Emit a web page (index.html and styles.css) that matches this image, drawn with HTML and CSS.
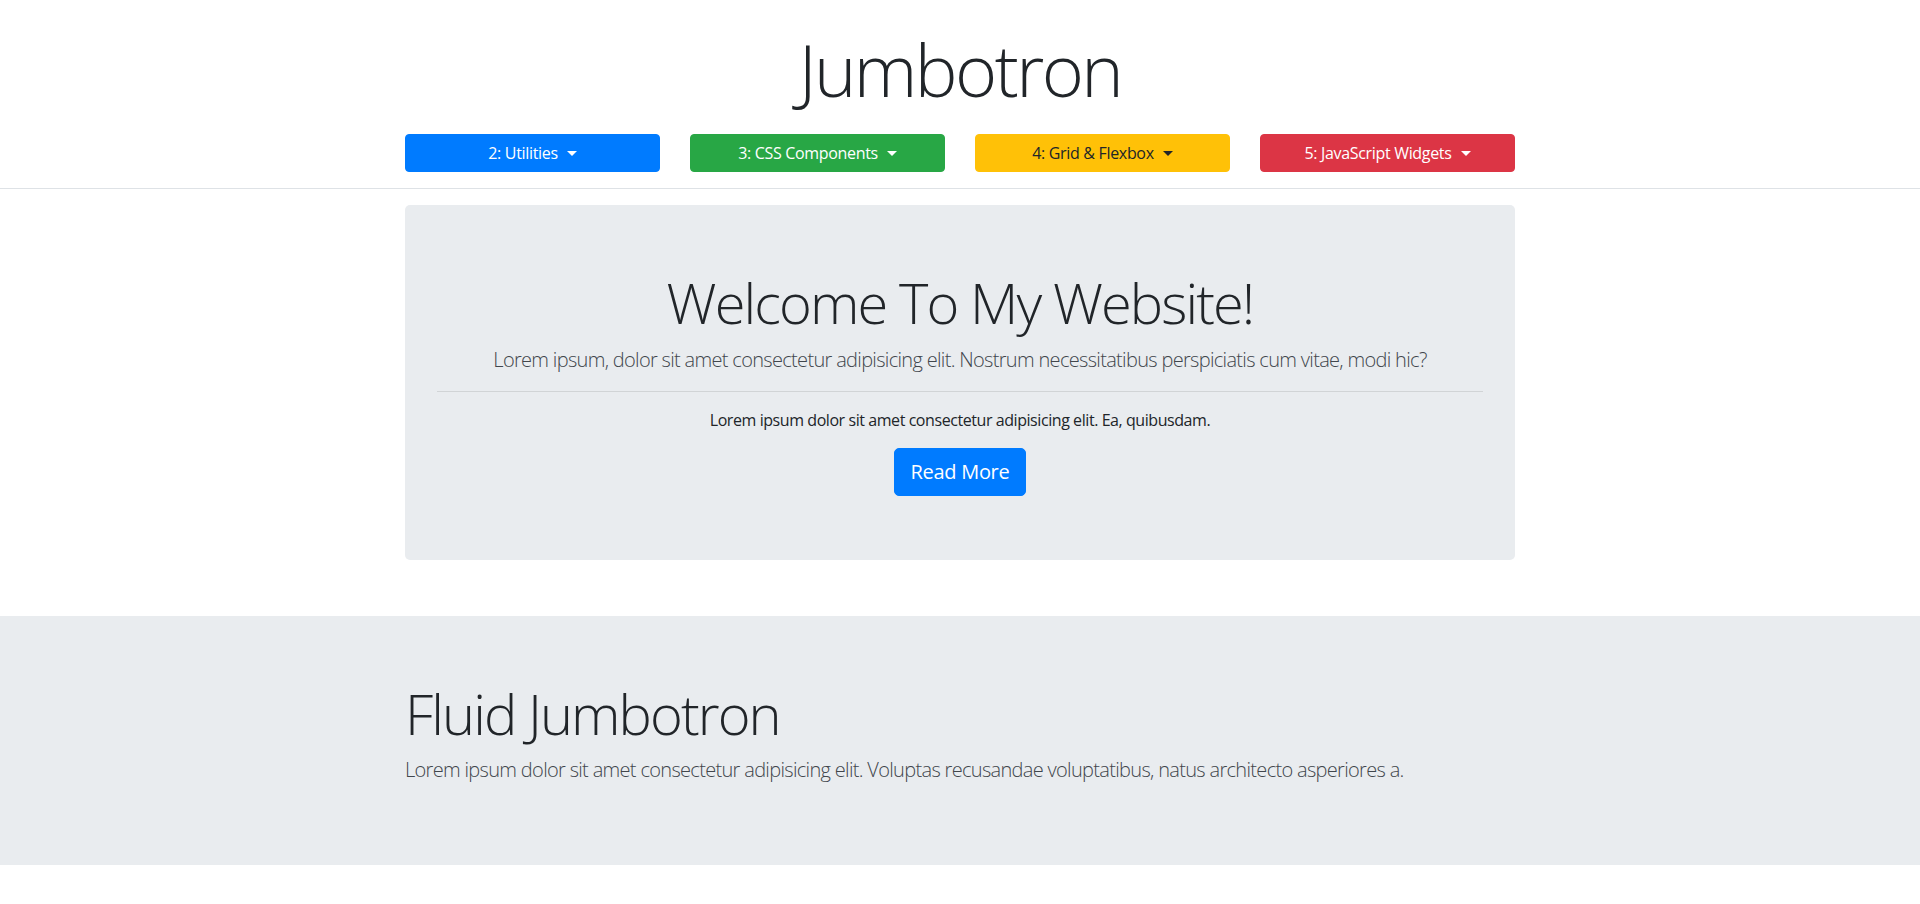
FILE: index.html
```html
<!DOCTYPE html>
<html lang="en">
<head>
<meta charset="utf-8">
<title>Jumbotron</title>
<link rel="stylesheet" href="styles.css">
</head>
<body>
<header class="site-header">
  <div class="container">
    <h1 class="display-3 text-center">Jumbotron</h1>
    <div class="menu-row">
      <button class="btn btn-primary dropdown-toggle">2: Utilities</button>
      <button class="btn btn-success dropdown-toggle">3: CSS Components</button>
      <button class="btn btn-warning dropdown-toggle">4: Grid &amp; Flexbox</button>
      <button class="btn btn-danger dropdown-toggle">5: JavaScript Widgets</button>
    </div>
  </div>
</header>

<main>
  <div class="container">
    <section class="jumbotron text-center">
      <h1 class="display-4">Welcome To My Website!</h1>
      <p class="lead">Lorem ipsum, dolor sit amet consectetur adipisicing elit. Nostrum necessitatibus perspiciatis cum vitae, modi hic?</p>
      <hr class="divider">
      <p class="body-text">Lorem ipsum dolor sit amet consectetur adipisicing elit. Ea, quibusdam.</p>
      <a class="btn btn-primary btn-lg" href="#">Read More</a>
    </section>
  </div>

  <section class="jumbotron jumbotron-fluid">
    <div class="container">
      <h1 class="display-4">Fluid Jumbotron</h1>
      <p class="lead">Lorem ipsum dolor sit amet consectetur adipisicing elit. Voluptas recusandae voluptatibus, natus architecto asperiores a.</p>
    </div>
  </section>
</main>
</body>
</html>
```
FILE: styles.css
```css
* { box-sizing: border-box; }

html, body {
  margin: 0;
  padding: 0;
}

body {
  font-family: "Open Sans", "Noto Sans", "Liberation Sans", sans-serif;
  font-size: 16px;
  line-height: 1.5;
  color: #212529;
  background: #fff;
}

.container {
  width: 1140px;
  margin: 0 auto;
  padding: 0 15px;
}

.text-center { text-align: center; }

.site-header {
  border-bottom: 1px solid #dee2e6;
  padding: 26px 0 16px;
}

.display-3 {
  font-size: 72px;
  font-weight: 300;
  line-height: 1.2;
  letter-spacing: -0.036em;
  margin: 0 0 22px;
}

.display-4 {
  font-size: 56px;
  font-weight: 300;
  line-height: 1.2;
  letter-spacing: -0.034em;
  margin: 0 0 8px;
}

.menu-row {
  display: grid;
  grid-template-columns: repeat(4, 1fr);
  column-gap: 30px;
}

.btn {
  display: inline-block;
  font-family: inherit;
  font-size: 16px;
  font-weight: 400;
  line-height: 24px;
  padding: 6px 12px;
  border: 1px solid transparent;
  border-radius: 4px;
  color: #fff;
  text-align: center;
  text-decoration: none;
  letter-spacing: -0.02em;
  cursor: pointer;
}

.menu-row .btn { width: 100%; }

.btn-primary { background: #007bff; border-color: #007bff; }
.btn-success { background: #28a745; border-color: #28a745; }
.btn-warning { background: #ffc107; border-color: #ffc107; color: #212529; }
.btn-danger  { background: #dc3545; border-color: #dc3545; }

.dropdown-toggle::after {
  content: "";
  display: inline-block;
  margin-left: 9px;
  vertical-align: 3px;
  border-top: 5px solid;
  border-right: 5px solid transparent;
  border-left: 5px solid transparent;
  border-bottom: 0;
}

.btn-lg {
  font-size: 20px;
  line-height: 30px;
  padding: 8px 16px;
  border-radius: 5px;
  letter-spacing: -0.015em;
}

main { padding-top: 16px; }

.jumbotron {
  background: #e9ecef;
  padding: 64px 32px;
  border-radius: 5px;
  margin-bottom: 56px;
}

.jumbotron-fluid {
  padding: 64px 0;
  border-radius: 0;
  margin-bottom: 0;
}

.lead {
  font-size: 20px;
  font-weight: 300;
  line-height: 30px;
  letter-spacing: -0.034em;
  color: #41464c;
  margin: 0 0 16px;
}

.divider {
  border: 0;
  border-top: 1px solid rgba(0, 0, 0, 0.1);
  margin: 0 0 16px;
}

.body-text {
  letter-spacing: -0.027em;
  margin: 0 0 16px;
}
```
